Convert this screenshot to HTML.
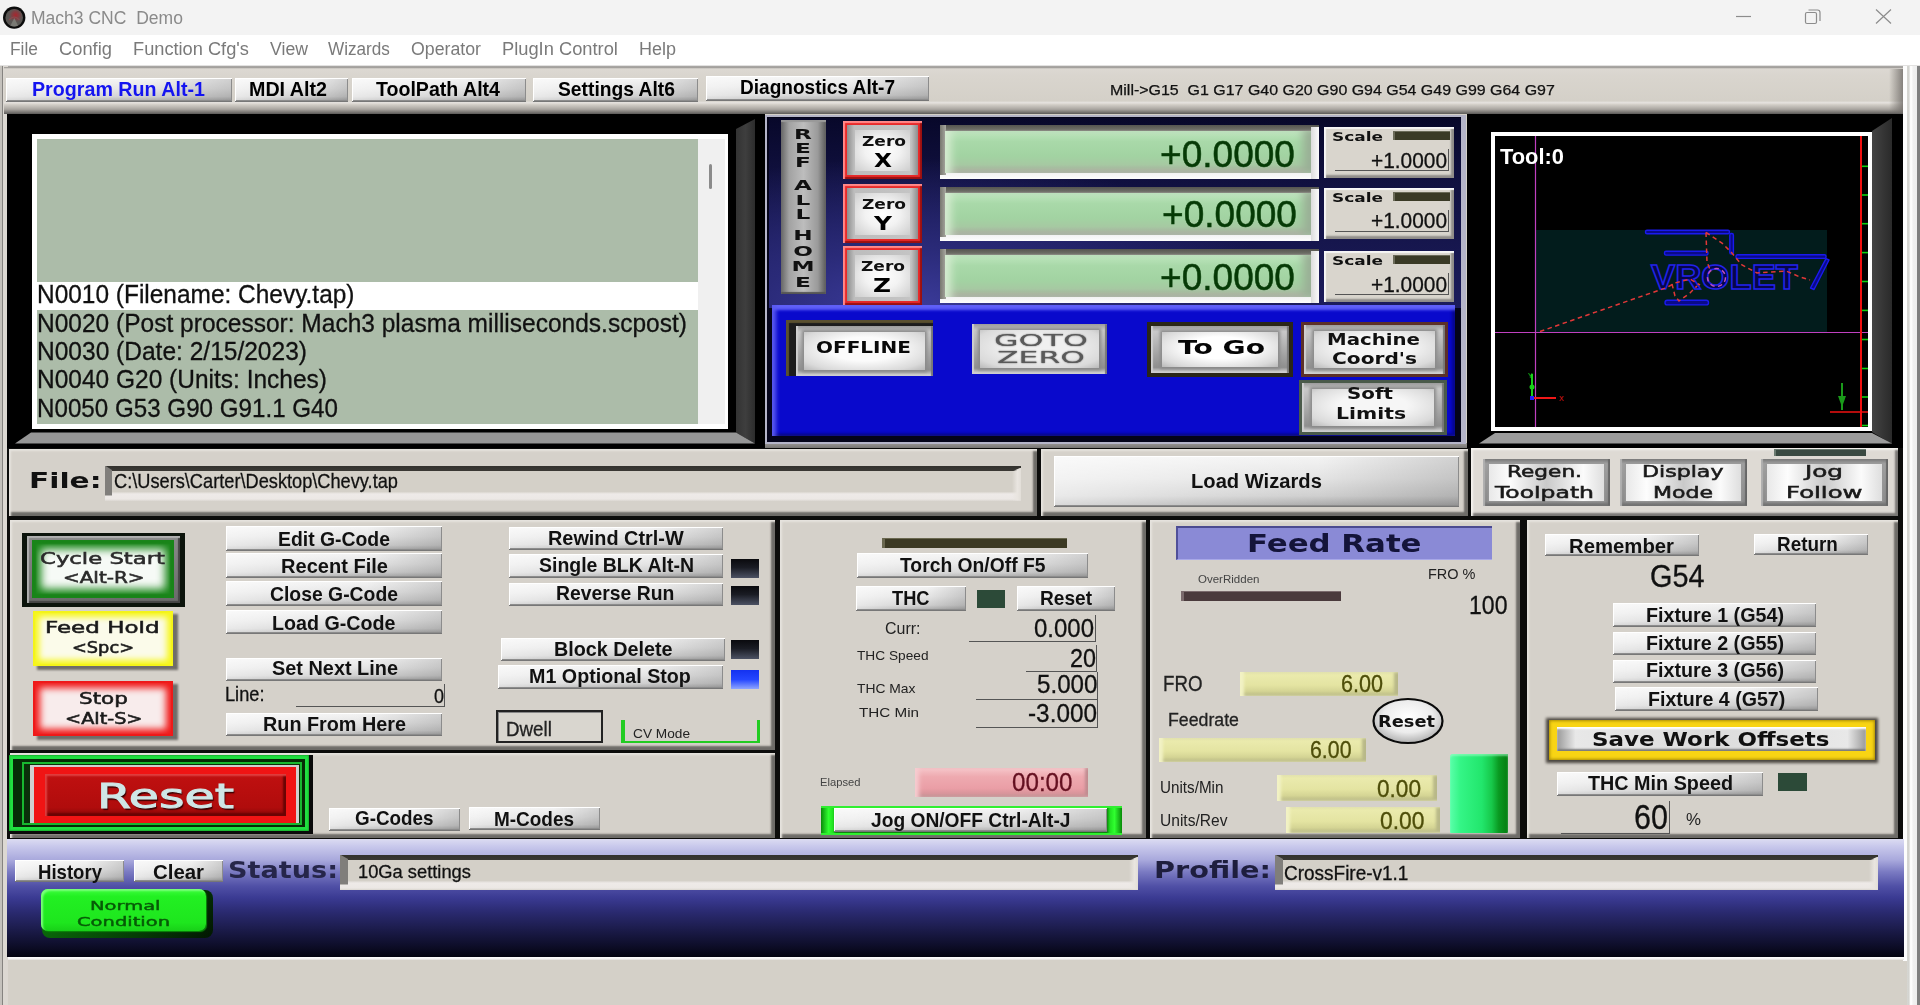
<!DOCTYPE html>
<html lang="en"><head><meta charset="utf-8"><title>Mach3 CNC Demo</title>
<style>
html,body{margin:0;padding:0;}
body{width:1920px;height:1005px;overflow:hidden;position:relative;background:#d4d0c8;font-family:"Liberation Sans",sans-serif;}
body div{position:absolute;box-sizing:border-box;}
.t{position:absolute;white-space:pre;transform-origin:0 50%;display:block;}
svg{position:absolute;overflow:visible;}
</style></head>
<body>
<div style="left:0px;top:0px;width:1920px;height:35px;background:#f3f3f3;"></div>
<div style="left:0px;top:35px;width:1920px;height:31px;background:#fff;"></div>
<svg style="left:2px;top:5px" width="25" height="25" viewBox="2 5 25 25"><defs><radialGradient id="icr" cx="58%" cy="35%" r="45%"><stop offset="0" stop-color="#a8262e"/><stop offset="0.5" stop-color="#7c4044"/><stop offset="1" stop-color="#5e5a58" stop-opacity="0"/></radialGradient></defs><circle cx="14.2" cy="17.6" r="11.2" fill="#0c0c0c"/><circle cx="14.2" cy="17.8" r="8.8" fill="#595653"/><circle cx="14.2" cy="17.8" r="8.8" fill="url(#icr)"/><path d="M10.5 25.5L14.3 18L18 25.5Q14.3 27.5 10.5 25.5Z" fill="#7a7a74"/><path d="M9 20Q14 14 19.500 20" stroke="#8a4a4e" stroke-width="1.2" fill="none"/></svg>
<span class="t" style="left:31px;top:9.01px;font:normal 18.7px/18.7px 'Liberation Sans',sans-serif;color:#8a8a8a;transform:scaleX(0.9376);">Mach3 CNC  Demo</span>
<svg style="left:1730px;top:5px" width="170" height="24" viewBox="0 0 170 24" fill="none" stroke="#8c8c8c" stroke-width="1.2"><path d="M6 11.5H21"/><rect x="75.5" y="7.5" width="11" height="11" rx="1.5"/><path d="M78.5 5H87.5Q90 5 90 7.5V16"/><path d="M146 4.5L161 18.5M161 4.5L146 18.5"/></svg>
<span class="t" style="left:10px;top:40.01px;font:normal 18.3px/18.3px 'Liberation Sans',sans-serif;color:#7a7a7a;transform:scaleX(0.9495);">File</span>
<span class="t" style="left:59px;top:40.01px;font:normal 18.3px/18.3px 'Liberation Sans',sans-serif;color:#7a7a7a;transform:scaleX(1.0019);">Config</span>
<span class="t" style="left:133px;top:40.01px;font:normal 18.3px/18.3px 'Liberation Sans',sans-serif;color:#7a7a7a;transform:scaleX(0.9966);">Function Cfg&#x27;s</span>
<span class="t" style="left:270px;top:40.01px;font:normal 18.3px/18.3px 'Liberation Sans',sans-serif;color:#7a7a7a;transform:scaleX(0.9660);">View</span>
<span class="t" style="left:328px;top:40.01px;font:normal 18.3px/18.3px 'Liberation Sans',sans-serif;color:#7a7a7a;transform:scaleX(0.9381);">Wizards</span>
<span class="t" style="left:411px;top:40.01px;font:normal 18.3px/18.3px 'Liberation Sans',sans-serif;color:#7a7a7a;transform:scaleX(0.9693);">Operator</span>
<span class="t" style="left:502px;top:40.01px;font:normal 18.3px/18.3px 'Liberation Sans',sans-serif;color:#7a7a7a;transform:scaleX(1.0003);">PlugIn Control</span>
<span class="t" style="left:639px;top:40.01px;font:normal 18.3px/18.3px 'Liberation Sans',sans-serif;color:#7a7a7a;transform:scaleX(0.9831);">Help</span>
<div style="left:0px;top:65px;width:1920px;height:2px;background:linear-gradient(180deg,#fff,#8a8784);"></div>
<div style="left:0px;top:66px;width:1.5px;height:940px;background:#c4c1bc;"></div>
<div style="left:1.5px;top:66px;width:1.5px;height:940px;background:#858380;"></div>
<div style="left:3px;top:66px;width:4.5px;height:940px;background:#dcd8d2;"></div>
<div style="left:1903.3px;top:66px;width:16.7px;height:940px;background:linear-gradient(90deg,#fdfdfd 0,#fdfdfd 3.5px,#d6d6d2 4.2px,#d2d2ce 6.2px,#fcfcfc 7px,#fdfdfd 9px,#f1f1f1 9.8px,#efefef 13.6px,#808080 14.2px,#808080 100%);"></div>
<div style="left:1903.3px;top:960.5px;width:4px;height:45px;background:#d4d0c8;"></div>
<div style="left:4px;top:67px;width:1899px;height:47px;background:linear-gradient(180deg,#908d8a 0%,#dcd8d2 4%,#d9d5ce 20%,#d4d0c8 72%,#e6e3df 76%,#d2cec7 80%,#a9a5a0 90%,#5c5a58 100%);"></div>
<div style="left:1889px;top:69px;width:14.3px;height:44px;background:linear-gradient(90deg,rgba(120,116,112,0),rgba(112,108,104,.8));"></div>
<div style="left:6px;top:78px;width:226px;height:23px;background:linear-gradient(90deg,rgba(255,255,255,.55) 0%,rgba(255,255,255,.25) 35%,rgba(0,0,0,0) 65%,rgba(0,0,0,.14) 100%),linear-gradient(180deg,#f4f4f4 0%,#e4e4e4 45%,#cfcfcf 80%,#a9a9a9 100%);box-shadow:inset 1px 1px 0 #fff,inset -1px -1px 0 #8c8c8c,0 1px 0 #777;"></div>
<span class="t" style="left:32px;top:79.21px;font:bold 20.8px/20.8px 'Liberation Sans',sans-serif;color:#1414f0;transform:scaleX(0.9455);">Program Run Alt-1</span>
<div style="left:235px;top:78px;width:113px;height:23px;background:linear-gradient(90deg,rgba(255,255,255,.55) 0%,rgba(255,255,255,.25) 35%,rgba(0,0,0,0) 65%,rgba(0,0,0,.14) 100%),linear-gradient(180deg,#f4f4f4 0%,#e4e4e4 45%,#cfcfcf 80%,#a9a9a9 100%);box-shadow:inset 1px 1px 0 #fff,inset -1px -1px 0 #8c8c8c,0 1px 0 #777;"></div>
<span class="t" style="left:249px;top:79.21px;font:bold 20.8px/20.8px 'Liberation Sans',sans-serif;color:#000;transform:scaleX(0.9463);">MDI Alt2</span>
<div style="left:352px;top:78px;width:174px;height:23px;background:linear-gradient(90deg,rgba(255,255,255,.55) 0%,rgba(255,255,255,.25) 35%,rgba(0,0,0,0) 65%,rgba(0,0,0,.14) 100%),linear-gradient(180deg,#f4f4f4 0%,#e4e4e4 45%,#cfcfcf 80%,#a9a9a9 100%);box-shadow:inset 1px 1px 0 #fff,inset -1px -1px 0 #8c8c8c,0 1px 0 #777;"></div>
<span class="t" style="left:376px;top:79.21px;font:bold 20.8px/20.8px 'Liberation Sans',sans-serif;color:#000;transform:scaleX(0.9413);">ToolPath Alt4</span>
<div style="left:533px;top:78px;width:165px;height:23px;background:linear-gradient(90deg,rgba(255,255,255,.55) 0%,rgba(255,255,255,.25) 35%,rgba(0,0,0,0) 65%,rgba(0,0,0,.14) 100%),linear-gradient(180deg,#f4f4f4 0%,#e4e4e4 45%,#cfcfcf 80%,#a9a9a9 100%);box-shadow:inset 1px 1px 0 #fff,inset -1px -1px 0 #8c8c8c,0 1px 0 #777;"></div>
<span class="t" style="left:558px;top:79.21px;font:bold 20.8px/20.8px 'Liberation Sans',sans-serif;color:#000;transform:scaleX(0.9259);">Settings Alt6</span>
<div style="left:706px;top:76px;width:223px;height:24px;background:linear-gradient(90deg,rgba(255,255,255,.55) 0%,rgba(255,255,255,.25) 35%,rgba(0,0,0,0) 65%,rgba(0,0,0,.14) 100%),linear-gradient(180deg,#f4f4f4 0%,#e4e4e4 45%,#cfcfcf 80%,#a9a9a9 100%);box-shadow:inset 1px 1px 0 #fff,inset -1px -1px 0 #8c8c8c,0 1px 0 #777;"></div>
<span class="t" style="left:740px;top:77.21px;font:bold 20.8px/20.8px 'Liberation Sans',sans-serif;color:#000;transform:scaleX(0.9165);">Diagnostics Alt-7</span>
<span class="t" style="left:1110px;top:82.81px;font:normal 14.1px/14.1px 'Liberation Sans',sans-serif;color:#111;transform:scaleX(1.1322);-webkit-text-stroke:0.25px #111;">Mill-&gt;G15  G1 G17 G40 G20 G90 G94 G54 G49 G99 G64 G97</span>
<div style="left:7px;top:114px;width:758px;height:334px;background:#000;"></div>
<svg style="left:7px;top:114px" width="758" height="334" viewBox="7 114 758 334"><defs><linearGradient id="gbv" x1="0" x2="1"><stop offset="0" stop-color="#333"/><stop offset="0.5" stop-color="#3e3e3e"/><stop offset="1" stop-color="#2c2c2c"/></linearGradient></defs><polygon points="755,119 755,443.5 736,432.5 736,129" fill="url(#gbv)"/><polygon points="15,443.5 755,443.5 736,432.5 31,432.5" fill="#969696"/></svg>
<div style="left:31.5px;top:134px;width:696px;height:294.5px;background:#fff;"></div>
<div style="left:36.5px;top:139px;width:661px;height:284.5px;background:#acbca9;"></div>
<div style="left:697.5px;top:139px;width:27px;height:284.5px;background:#f0f0f0;"></div>
<div style="left:709.2px;top:164px;width:3.2px;height:25px;background:#8b8b8b;border-radius:1.5px;"></div>
<div style="left:36.5px;top:281.5px;width:661px;height:28px;background:#fff;"></div>
<span class="t" style="left:37px;top:282.20px;font:normal 25.3px/25.3px 'Liberation Sans',sans-serif;color:#111;transform:scaleX(0.9663);-webkit-text-stroke:0.3px #111;">N0010 (Filename: Chevy.tap)</span>
<span class="t" style="left:37px;top:310.50px;font:normal 25.3px/25.3px 'Liberation Sans',sans-serif;color:#111;transform:scaleX(0.9691);-webkit-text-stroke:0.3px #111;">N0020 (Post processor: Mach3 plasma milliseconds.scpost)</span>
<span class="t" style="left:37px;top:339.00px;font:normal 25.3px/25.3px 'Liberation Sans',sans-serif;color:#111;transform:scaleX(0.9695);-webkit-text-stroke:0.3px #111;">N0030 (Date: 2/15/2023)</span>
<span class="t" style="left:37px;top:367.40px;font:normal 25.3px/25.3px 'Liberation Sans',sans-serif;color:#111;transform:scaleX(0.9682);-webkit-text-stroke:0.3px #111;">N0040 G20 (Units: Inches)</span>
<span class="t" style="left:37px;top:395.60px;font:normal 25.3px/25.3px 'Liberation Sans',sans-serif;color:#111;transform:scaleX(0.9554);-webkit-text-stroke:0.3px #111;">N0050 G53 G90 G91.1 G40</span>
<div style="left:764.5px;top:443px;width:702.0px;height:5.5px;background:linear-gradient(180deg,#9a9896,#6e6c6a);"></div>
<div style="left:764.5px;top:114.5px;width:701.5px;height:329px;background:#b4b4c8;"></div>
<div style="left:767px;top:117px;width:694px;height:324.5px;background:#04041a;"></div>
<div style="left:769px;top:118px;width:692px;height:190px;background:radial-gradient(ellipse 380px 150px at 20% 100%,#3c3c9c 0%,#2a2a78 40%,rgba(18,18,70,0) 100%),linear-gradient(180deg,#08082a 0%,#10103e 30%,#1c1c5c 100%);"></div>
<div style="left:772px;top:305px;width:683px;height:131px;background:#0909cc;box-shadow:inset 6px 0 4px -2px #5a5af0,inset 0 7px 3px -2px #6060f8,inset -5px 0 3px -2px #050590,inset 0 -3px 3px -1px #040470;"></div>
<div style="left:781px;top:120px;width:45px;height:174px;background:linear-gradient(90deg,#666 0%,#a2a2a2 18%,#bdbdbd 50%,#9a9a9a 82%,#5a5a5a 100%);box-shadow:inset 0 2px 1px #999,inset 0 -2px 1px #555;"></div>
<div style="left:793.50px;top:125.50px;width:18px;writing-mode:vertical-rl;text-orientation:upright;font:bold 14.5px/18px 'DejaVu Sans',sans-serif;letter-spacing:-1.90px;white-space:pre;color:#111;transform:scaleX(1.6);transform-origin:50% 50%;">REF</div>
<div style="left:793.50px;top:176.70px;width:18px;writing-mode:vertical-rl;text-orientation:upright;font:bold 14.5px/18px 'DejaVu Sans',sans-serif;letter-spacing:-1.35px;white-space:pre;color:#111;transform:scaleX(1.6);transform-origin:50% 50%;">ALL</div>
<div style="left:793.50px;top:226.80px;width:18px;writing-mode:vertical-rl;text-orientation:upright;font:bold 14.5px/18px 'DejaVu Sans',sans-serif;letter-spacing:-0.33px;white-space:pre;color:#111;transform:scaleX(1.6);transform-origin:50% 50%;">HOME</div>
<div style="left:843px;top:121px;width:79px;height:58px;background:#e82a2a;box-shadow:inset 2px 2px 1px #ff8a8a,inset -2px -2px 1px #9a1010;"></div>
<div style="left:847px;top:125px;width:71px;height:50px;background:linear-gradient(90deg,#8d8d8d 0%,#bdbdbd 10%,#c4c4c4 90%,#8d8d8d 100%);"></div>
<div style="left:855px;top:130px;width:55px;height:41px;background:radial-gradient(ellipse at 50% 50%,#ffffff 0%,#f2f2f2 45%,#cdcdcd 100%);"></div>
<span class="t" style="left:862px;top:134.00px;font:bold 14.5px/14.5px 'DejaVu Sans','Liberation Sans',sans-serif;color:#111;transform:scaleX(1.1746);">Zero</span>
<span class="t" style="left:874px;top:151.01px;font:bold 19px/19px 'DejaVu Sans','Liberation Sans',sans-serif;color:#000;transform:scaleX(1.2287);">X</span>
<div style="left:843px;top:184px;width:79px;height:58.5px;background:#e82a2a;box-shadow:inset 2px 2px 1px #ff8a8a,inset -2px -2px 1px #9a1010;"></div>
<div style="left:847px;top:188px;width:71px;height:50.5px;background:linear-gradient(90deg,#8d8d8d 0%,#bdbdbd 10%,#c4c4c4 90%,#8d8d8d 100%);"></div>
<div style="left:855px;top:193px;width:55px;height:41.5px;background:radial-gradient(ellipse at 50% 50%,#ffffff 0%,#f2f2f2 45%,#cdcdcd 100%);"></div>
<span class="t" style="left:862px;top:197.00px;font:bold 14.5px/14.5px 'DejaVu Sans','Liberation Sans',sans-serif;color:#111;transform:scaleX(1.1746);">Zero</span>
<span class="t" style="left:874px;top:214.01px;font:bold 19px/19px 'DejaVu Sans','Liberation Sans',sans-serif;color:#000;transform:scaleX(1.3083);">Y</span>
<div style="left:843px;top:245.5px;width:79px;height:59.5px;background:#e82a2a;box-shadow:inset 2px 2px 1px #ff8a8a,inset -2px -2px 1px #9a1010;"></div>
<div style="left:847px;top:249.5px;width:71px;height:51.5px;background:linear-gradient(90deg,#8d8d8d 0%,#bdbdbd 10%,#c4c4c4 90%,#8d8d8d 100%);"></div>
<div style="left:855px;top:254.5px;width:55px;height:42.5px;background:radial-gradient(ellipse at 50% 50%,#ffffff 0%,#f2f2f2 45%,#cdcdcd 100%);"></div>
<span class="t" style="left:861px;top:258.50px;font:bold 14.5px/14.5px 'DejaVu Sans','Liberation Sans',sans-serif;color:#111;transform:scaleX(1.1746);">Zero</span>
<span class="t" style="left:873px;top:275.51px;font:bold 19px/19px 'DejaVu Sans','Liberation Sans',sans-serif;color:#000;transform:scaleX(1.3066);">Z</span>
<div style="left:940px;top:125px;width:379px;height:54px;background:linear-gradient(180deg,#55554f 0%,#6d6d66 8%,#9a9a92 12%,#c8c8c0 80%,#f4f4f4 90%,#fdfdfd 100%);"></div>
<div style="left:940px;top:125px;width:6px;height:50px;background:linear-gradient(90deg,#77776f,#a8a8a0);"></div>
<div style="left:1311px;top:127px;width:8px;height:52px;background:linear-gradient(90deg,#dcdcdc,#fbfbfb);"></div>
<div style="left:945px;top:131px;width:366px;height:42px;background:linear-gradient(180deg,#bfe6bf 0%,#a9d9a9 25%,#a2d3a2 60%,#a6c9a2 80%,#a9a99f 100%);box-shadow:inset 10px 0 8px -4px #d6ecd2,inset -12px 0 8px -4px #9ab096;"></div>
<span class="t" style="left:1160px;top:136.71px;font:normal 36.4px/36.4px 'Liberation Sans',sans-serif;color:#063a06;transform:scaleX(1.0182);-webkit-text-stroke:0.5px #0a400a;">+0.0000</span>
<div style="left:940px;top:186.5px;width:379px;height:54px;background:linear-gradient(180deg,#55554f 0%,#6d6d66 8%,#9a9a92 12%,#c8c8c0 80%,#f4f4f4 90%,#fdfdfd 100%);"></div>
<div style="left:940px;top:186.5px;width:6px;height:50px;background:linear-gradient(90deg,#77776f,#a8a8a0);"></div>
<div style="left:1311px;top:188.5px;width:8px;height:52px;background:linear-gradient(90deg,#dcdcdc,#fbfbfb);"></div>
<div style="left:945px;top:192.5px;width:366px;height:42px;background:linear-gradient(180deg,#bfe6bf 0%,#a9d9a9 25%,#a2d3a2 60%,#a6c9a2 80%,#a9a99f 100%);box-shadow:inset 10px 0 8px -4px #d6ecd2,inset -12px 0 8px -4px #9ab096;"></div>
<span class="t" style="left:1162px;top:197.01px;font:normal 36.4px/36.4px 'Liberation Sans',sans-serif;color:#063a06;transform:scaleX(1.0182);-webkit-text-stroke:0.5px #0a400a;">+0.0000</span>
<div style="left:940px;top:249px;width:379px;height:54px;background:linear-gradient(180deg,#55554f 0%,#6d6d66 8%,#9a9a92 12%,#c8c8c0 80%,#f4f4f4 90%,#fdfdfd 100%);"></div>
<div style="left:940px;top:249px;width:6px;height:50px;background:linear-gradient(90deg,#77776f,#a8a8a0);"></div>
<div style="left:1311px;top:251px;width:8px;height:52px;background:linear-gradient(90deg,#dcdcdc,#fbfbfb);"></div>
<div style="left:945px;top:255px;width:366px;height:42px;background:linear-gradient(180deg,#bfe6bf 0%,#a9d9a9 25%,#a2d3a2 60%,#a6c9a2 80%,#a9a99f 100%);box-shadow:inset 10px 0 8px -4px #d6ecd2,inset -12px 0 8px -4px #9ab096;"></div>
<span class="t" style="left:1160px;top:260.01px;font:normal 36.4px/36.4px 'Liberation Sans',sans-serif;color:#063a06;transform:scaleX(1.0182);-webkit-text-stroke:0.5px #0a400a;">+0.0000</span>
<div style="left:1324px;top:127px;width:130px;height:51px;background:#d9d5cd;box-shadow:inset 2px 2px 1px #f6f6f6,inset -3px -3px 2px #8f8c88;"></div>
<span class="t" style="left:1332px;top:130.01px;font:bold 13px/13px 'DejaVu Sans','Liberation Sans',sans-serif;color:#111;transform:scaleX(1.3038);">Scale</span>
<div style="left:1393px;top:131px;width:57px;height:9px;background:#3a3a26;box-shadow:inset 2px 1px 0 #6a6a58;"></div>
<span class="t" style="left:1371px;top:150.50px;font:normal 21.3px/21.3px 'Liberation Sans',sans-serif;color:#111;transform:scaleX(0.9795);-webkit-text-stroke:0.3px #111;">+1.0000</span>
<div style="left:1335px;top:170px;width:114px;height:1px;background:#555;"></div>
<div style="left:1448px;top:149px;width:1px;height:22px;background:#555;"></div>
<div style="left:1324px;top:187.5px;width:130px;height:51px;background:#d9d5cd;box-shadow:inset 2px 2px 1px #f6f6f6,inset -3px -3px 2px #8f8c88;"></div>
<span class="t" style="left:1332px;top:190.51px;font:bold 13px/13px 'DejaVu Sans','Liberation Sans',sans-serif;color:#111;transform:scaleX(1.3038);">Scale</span>
<div style="left:1393px;top:191.5px;width:57px;height:9px;background:#3a3a26;box-shadow:inset 2px 1px 0 #6a6a58;"></div>
<span class="t" style="left:1371px;top:211.00px;font:normal 21.3px/21.3px 'Liberation Sans',sans-serif;color:#111;transform:scaleX(0.9795);-webkit-text-stroke:0.3px #111;">+1.0000</span>
<div style="left:1335px;top:230.5px;width:114px;height:1px;background:#555;"></div>
<div style="left:1448px;top:209.5px;width:1px;height:22px;background:#555;"></div>
<div style="left:1324px;top:251px;width:130px;height:51px;background:#d9d5cd;box-shadow:inset 2px 2px 1px #f6f6f6,inset -3px -3px 2px #8f8c88;"></div>
<span class="t" style="left:1332px;top:254.01px;font:bold 13px/13px 'DejaVu Sans','Liberation Sans',sans-serif;color:#111;transform:scaleX(1.3038);">Scale</span>
<div style="left:1393px;top:255px;width:57px;height:9px;background:#3a3a26;box-shadow:inset 2px 1px 0 #6a6a58;"></div>
<span class="t" style="left:1371px;top:274.50px;font:normal 21.3px/21.3px 'Liberation Sans',sans-serif;color:#111;transform:scaleX(0.9795);-webkit-text-stroke:0.3px #111;">+1.0000</span>
<div style="left:1335px;top:294px;width:114px;height:1px;background:#555;"></div>
<div style="left:1448px;top:273px;width:1px;height:22px;background:#555;"></div>
<div style="left:786px;top:320px;width:147px;height:56px;background:#1c1c1c;box-shadow:inset 3px 3px 1px #5a5030;"></div>
<div style="left:796px;top:326px;width:137px;height:50px;background:linear-gradient(180deg,#9b9b9b 0%,#c9c9c9 12%,#8f8f8f 88%,#e0e0e0 100%);box-shadow:inset 2px 0 1px #cfcfcf,inset -2px 0 1px #777;"></div>
<div style="left:804px;top:332px;width:121px;height:38px;background:radial-gradient(ellipse at 50% 45%,#fbfbfb 0%,#fbfbfb 40%,#dadada 80%,#b9b9b9 100%);box-shadow:0 0 3px 2px #8a8a8a;"></div>
<span class="t" style="left:816px;top:340.51px;font:bold 15.5px/15.5px 'DejaVu Sans','Liberation Sans',sans-serif;color:#0a0a0a;transform:scaleX(1.2915);">OFFLINE</span>
<div style="left:972px;top:324px;width:135px;height:50px;background:linear-gradient(180deg,#9b9b9b 0%,#c9c9c9 12%,#8f8f8f 88%,#e0e0e0 100%);box-shadow:inset 2px 0 1px #cfcfcf,inset -2px 0 1px #777;"></div>
<div style="left:980px;top:330px;width:119px;height:38px;background:radial-gradient(ellipse at 50% 45%,#f0f0f0 0%,#f0f0f0 40%,#dadada 80%,#b9b9b9 100%);box-shadow:0 0 3px 2px #8a8a8a;"></div>
<span class="t" style="left:994px;top:333.70px;font:normal 15.5px/15.5px 'DejaVu Sans','Liberation Sans',sans-serif;color:#5a5a5a;transform:scaleX(2.0488);text-shadow:0 0 1px #333;">GOTO</span>
<span class="t" style="left:997px;top:350.60px;font:normal 15.5px/15.5px 'DejaVu Sans','Liberation Sans',sans-serif;color:#5a5a5a;transform:scaleX(2.0284);text-shadow:0 0 1px #333;">ZERO</span>
<div style="left:1147px;top:322px;width:146px;height:55px;background:#2a2618;"></div>
<div style="left:1151px;top:326px;width:138px;height:47px;background:linear-gradient(180deg,#9b9b9b 0%,#c9c9c9 12%,#8f8f8f 88%,#e0e0e0 100%);box-shadow:inset 2px 0 1px #cfcfcf,inset -2px 0 1px #777;"></div>
<div style="left:1162px;top:332px;width:116px;height:35px;background:radial-gradient(ellipse at 50% 45%,#ffffff 0%,#ffffff 40%,#dadada 80%,#b9b9b9 100%);box-shadow:0 0 3px 2px #8a8a8a;"></div>
<span class="t" style="left:1178px;top:338.01px;font:bold 19px/19px 'DejaVu Sans','Liberation Sans',sans-serif;color:#050505;transform:scaleX(1.4808);">To Go</span>
<div style="left:1301px;top:322px;width:147px;height:55px;background:#5c3028;"></div>
<div style="left:1304px;top:325px;width:141px;height:49px;background:linear-gradient(180deg,#9b9b9b 0%,#c9c9c9 12%,#8f8f8f 88%,#e0e0e0 100%);box-shadow:inset 2px 0 1px #cfcfcf,inset -2px 0 1px #777;"></div>
<div style="left:1314px;top:331px;width:121px;height:37px;background:radial-gradient(ellipse at 50% 45%,#f6f6f6 0%,#f6f6f6 40%,#dadada 80%,#b9b9b9 100%);box-shadow:0 0 3px 2px #8a8a8a;"></div>
<span class="t" style="left:1327px;top:331.81px;font:bold 16px/16px 'DejaVu Sans','Liberation Sans',sans-serif;color:#111;transform:scaleX(1.2347);">Machine</span>
<span class="t" style="left:1332px;top:350.51px;font:bold 16px/16px 'DejaVu Sans','Liberation Sans',sans-serif;color:#111;transform:scaleX(1.2594);">Coord&#x27;s</span>
<div style="left:1299px;top:380px;width:148px;height:55px;background:#4a5a4a;"></div>
<div style="left:1302px;top:383px;width:142px;height:49px;background:linear-gradient(180deg,#9b9b9b 0%,#c9c9c9 12%,#8f8f8f 88%,#e0e0e0 100%);box-shadow:inset 2px 0 1px #cfcfcf,inset -2px 0 1px #777;"></div>
<div style="left:1312px;top:389px;width:122px;height:37px;background:radial-gradient(ellipse at 50% 45%,#f6f6f6 0%,#f6f6f6 40%,#dadada 80%,#b9b9b9 100%);box-shadow:0 0 3px 2px #8a8a8a;"></div>
<span class="t" style="left:1347px;top:386.01px;font:bold 16px/16px 'DejaVu Sans','Liberation Sans',sans-serif;color:#111;transform:scaleX(1.2390);">Soft</span>
<span class="t" style="left:1336px;top:406.01px;font:bold 16px/16px 'DejaVu Sans','Liberation Sans',sans-serif;color:#111;transform:scaleX(1.2725);">Limits</span>
<div style="left:7px;top:448px;width:1896px;height:392px;background:#0c0c0b;"></div>
<div style="left:1467px;top:114px;width:436px;height:334px;background:#000;"></div>
<svg style="left:1467px;top:114px" width="436" height="334" viewBox="1467 114 436 334"><defs><linearGradient id="tpr" x1="0" x2="1"><stop offset="0" stop-color="#444"/><stop offset="1" stop-color="#2a2a2a"/></linearGradient></defs><polygon points="1892,118 1892,444 1872,432 1872,131" fill="url(#tpr)"/><polygon points="1479,443.5 1892,443.5 1872,433 1495,433" fill="#9c9c9c"/></svg>
<div style="left:1491px;top:132px;width:381px;height:299px;background:#fff;"></div>
<div style="left:1495px;top:136px;width:373px;height:291px;background:#000;"></div>
<div style="left:1536px;top:230px;width:291px;height:102px;background:#021c1c;"></div>
<svg style="left:1495px;top:136px" width="373" height="291" viewBox="1495 136 373 291"><line x1="1535.5" y1="136" x2="1535.5" y2="427" stroke="#c040c0" stroke-width="1.2"/><line x1="1495" y1="332.5" x2="1868" y2="332.5" stroke="#c040c0" stroke-width="1.2"/><line x1="1861" y1="136" x2="1861" y2="427" stroke="#f01010" stroke-width="2"/><line x1="1862" y1="166.3" x2="1868" y2="166.3" stroke="#10d010" stroke-width="1.6"/><line x1="1862" y1="195" x2="1868" y2="195" stroke="#10d010" stroke-width="1.6"/><line x1="1862" y1="223.7" x2="1868" y2="223.7" stroke="#10d010" stroke-width="1.6"/><line x1="1862" y1="252.6" x2="1868" y2="252.6" stroke="#10d010" stroke-width="1.6"/><line x1="1862" y1="281.5" x2="1868" y2="281.5" stroke="#10d010" stroke-width="1.6"/><line x1="1862" y1="310.4" x2="1868" y2="310.4" stroke="#10d010" stroke-width="1.6"/><line x1="1862" y1="339.5" x2="1868" y2="339.5" stroke="#10d010" stroke-width="1.6"/><line x1="1862" y1="368.5" x2="1868" y2="368.5" stroke="#10d010" stroke-width="1.6"/><line x1="1862" y1="397" x2="1868" y2="397" stroke="#10d010" stroke-width="1.6"/><line x1="1862" y1="425.5" x2="1868" y2="425.5" stroke="#10d010" stroke-width="1.6"/><g stroke="#1a1aee" stroke-width="1.4" fill="#0a0a88" stroke-linejoin="round"><rect x="1645.5" y="230.3" width="84" height="3.4" rx="1.5"/><rect x="1729.8" y="233.5" width="3.6" height="20.5" rx="1.5"/><rect x="1664.5" y="251.3" width="43.5" height="3.8" rx="1.5"/><rect x="1736" y="254.8" width="90" height="3.6" rx="1.5"/><rect x="1665" y="300.3" width="43.5" height="4.6" rx="2.2"/><path d="M1826 258.6L1829 260L1814 289.5L1810.5 288Z"/></g><text x="1651" y="289" font-family="'Liberation Sans',sans-serif" font-weight="bold" font-size="35" textLength="147" lengthAdjust="spacingAndGlyphs" fill="#06064a" stroke="#2222ea" stroke-width="1.5">VROLET</text><g stroke="#e23838" stroke-width="1.5" fill="none" stroke-dasharray="4.5 3.5"><path d="M1540 331.5L1580 317.5L1667 287.5L1675 283L1690 279L1700 285"/><path d="M1672 284L1675 296L1679 301L1690 293L1697 286"/><path d="M1706 232.5L1707 262L1711 272"/><path d="M1706 232.5L1722 243L1731 252L1742 265L1757 273L1770 272L1786 271L1800 277L1810 280"/><circle cx="1716.500" cy="277.5" r="9" stroke="#c050c0"/></g><line x1="1532" y1="374" x2="1532" y2="397" stroke="#18d018" stroke-width="2"/><line x1="1533" y1="398" x2="1556" y2="398" stroke="#f01818" stroke-width="2"/><rect x="1530" y="396" width="4" height="4" fill="#2020ff"/><circle cx="1532" cy="387" r="2.5" fill="#18d018"/><text x="1528" y="378" font-size="7" fill="#18d018" font-family="'Liberation Sans',sans-serif">Y</text><text x="1559" y="401" font-size="7" fill="#f01818" font-family="'Liberation Sans',sans-serif">X</text><line x1="1842" y1="383" x2="1842" y2="410" stroke="#1a9a1a" stroke-width="2"/><path d="M1838 396H1846L1842 407Z" fill="#1a9a1a"/><line x1="1830" y1="412" x2="1868" y2="412" stroke="#f01010" stroke-width="1.6"/></svg>
<span class="t" style="left:1499.5px;top:146.00px;font:bold 21.8px/21.8px 'Liberation Sans',sans-serif;color:#fff;transform:scaleX(1.0036);">Tool:0</span>
<div style="left:1471px;top:448px;width:427px;height:68px;background:#dedad4;box-shadow:inset 2px 2px 2px #f4f2ee,inset -3px -3px 2px #7a7875;"></div>
<div style="left:1774px;top:449px;width:92px;height:7px;background:#3a4a42;box-shadow:inset 2px 1px 0 #6a7a70;"></div>
<div style="left:1483px;top:459px;width:127px;height:47px;background:linear-gradient(180deg,#777 0%,#a0a0a0 10%,#8a8a8a 90%,#6a6a6a 100%);box-shadow:inset 2px 0 1px #b0b0b0,inset -2px 0 1px #666;"></div>
<div style="left:1489px;top:464px;width:115px;height:37px;background:linear-gradient(90deg,#e8e8e8 0%,#fdfdfd 18%,#c9c9c9 50%,#fbfbfb 82%,#dedede 100%);box-shadow:0 0 2px 1px #999;"></div>
<span class="t" style="left:1507px;top:464.31px;font:normal 16.5px/16.5px 'DejaVu Sans','Liberation Sans',sans-serif;color:#1a1a1a;transform:scaleX(1.3111);-webkit-text-stroke:0.55px #1a1a1a;">Regen.</span>
<span class="t" style="left:1495px;top:484.61px;font:normal 16.5px/16.5px 'DejaVu Sans','Liberation Sans',sans-serif;color:#1a1a1a;transform:scaleX(1.4232);-webkit-text-stroke:0.55px #1a1a1a;">Toolpath</span>
<div style="left:1620px;top:459px;width:127px;height:47px;background:linear-gradient(180deg,#777 0%,#a0a0a0 10%,#8a8a8a 90%,#6a6a6a 100%);box-shadow:inset 2px 0 1px #b0b0b0,inset -2px 0 1px #666;"></div>
<div style="left:1626px;top:464px;width:115px;height:37px;background:linear-gradient(90deg,#e8e8e8 0%,#fdfdfd 18%,#c9c9c9 50%,#fbfbfb 82%,#dedede 100%);box-shadow:0 0 2px 1px #999;"></div>
<span class="t" style="left:1642px;top:464.31px;font:normal 16.5px/16.5px 'DejaVu Sans','Liberation Sans',sans-serif;color:#1a1a1a;transform:scaleX(1.3400);-webkit-text-stroke:0.55px #1a1a1a;">Display</span>
<span class="t" style="left:1653px;top:484.61px;font:normal 16.5px/16.5px 'DejaVu Sans','Liberation Sans',sans-serif;color:#1a1a1a;transform:scaleX(1.3346);-webkit-text-stroke:0.55px #1a1a1a;">Mode</span>
<div style="left:1761px;top:459px;width:127px;height:47px;background:linear-gradient(180deg,#777 0%,#a0a0a0 10%,#8a8a8a 90%,#6a6a6a 100%);box-shadow:inset 2px 0 1px #b0b0b0,inset -2px 0 1px #666;"></div>
<div style="left:1767px;top:464px;width:115px;height:37px;background:linear-gradient(90deg,#e8e8e8 0%,#fdfdfd 18%,#c9c9c9 50%,#fbfbfb 82%,#dedede 100%);box-shadow:0 0 2px 1px #999;"></div>
<span class="t" style="left:1805px;top:464.31px;font:normal 16.5px/16.5px 'DejaVu Sans','Liberation Sans',sans-serif;color:#1a1a1a;transform:scaleX(1.4940);-webkit-text-stroke:0.55px #1a1a1a;">Jog</span>
<span class="t" style="left:1786px;top:484.61px;font:normal 16.5px/16.5px 'DejaVu Sans','Liberation Sans',sans-serif;color:#1a1a1a;transform:scaleX(1.4781);-webkit-text-stroke:0.55px #1a1a1a;">Follow</span>
<div style="left:9px;top:449px;width:1028px;height:67px;background:#d5d1ca;box-shadow:inset 2px 2px 2px #e6e3de,inset -4px -4px 2px #6e6c68;"></div>
<span class="t" style="left:28.5px;top:470.51px;font:bold 20.5px/20.5px 'DejaVu Sans','Liberation Sans',sans-serif;color:#111;transform:scaleX(1.4453);">File:</span>
<div style="left:105px;top:465.5px;width:916px;height:35px;background:linear-gradient(180deg,#33322e 0,#3a3834 4.5px,#d4d0c8 5px,#d4d0c8 calc(100% - 9.5px),#eeeae8 calc(100% - 7px),#ece8e5 calc(100% - 2px),#dad6d0 100%);"></div>
<div style="left:105px;top:465.5px;width:7px;height:30px;background:#807e7b;clip-path:polygon(0 0,100% 4.5px,100% 100%,0 100%);"></div>
<div style="left:1012px;top:467.5px;width:9px;height:33px;background:linear-gradient(90deg,rgba(236,232,228,0),#e9e5e0 60%,#e2ded8);clip-path:polygon(0 4px,100% 0,100% 100%,0 100%);"></div>
<span class="t" style="left:114px;top:471.01px;font:normal 20.8px/20.8px 'Liberation Sans',sans-serif;color:#111;transform:scaleX(0.8754);-webkit-text-stroke:0.3px #111;">C:\Users\Carter\Desktop\Chevy.tap</span>
<div style="left:1041px;top:449px;width:427px;height:67px;background:#d5d1ca;box-shadow:inset 2px 2px 2px #e6e3de,inset -4px -4px 2px #6e6c68;"></div>
<div style="left:1054px;top:456px;width:405px;height:50px;background:linear-gradient(90deg,rgba(255,255,255,.55) 0%,rgba(255,255,255,.25) 35%,rgba(0,0,0,0) 65%,rgba(0,0,0,.14) 100%),linear-gradient(180deg,#f4f4f4 0%,#e4e4e4 45%,#cfcfcf 80%,#a9a9a9 100%);box-shadow:inset 1px 1px 0 #fff,inset -1px -1px 0 #8c8c8c,0 1px 0 #777;"></div>
<span class="t" style="left:1191px;top:471.00px;font:bold 20.3px/20.3px 'Liberation Sans',sans-serif;color:#111;transform:scaleX(0.9941);">Load Wizards</span>
<div style="left:10px;top:520px;width:764.5px;height:230px;background:#d5d1ca;box-shadow:inset 2px 2px 2px #e6e3de,inset -4px -4px 2px #6e6c68;"></div>
<div style="left:10px;top:753px;width:764.5px;height:85px;background:#d5d1ca;box-shadow:inset 2px 2px 2px #e6e3de,inset -4px -4px 2px #6e6c68;"></div>
<div style="left:22px;top:533px;width:163px;height:74px;background:#0c140c;"></div>
<div style="left:27px;top:536px;width:153px;height:67px;background:linear-gradient(180deg,#8a8a8a,#6a6a6a);box-shadow:inset 2px 2px 1px #b0b0b0,inset -2px -2px 1px #444;"></div>
<div style="left:32px;top:540px;width:142px;height:58px;background:#f6faf6;box-shadow:inset 0 0 8px 9px #1a861a,inset 0 0 2px 4px #0f6a0f;"></div>
<span class="t" style="left:40px;top:550.71px;font:normal 16.5px/16.5px 'DejaVu Sans','Liberation Sans',sans-serif;color:#2a2a2a;transform:scaleX(1.3790);-webkit-text-stroke:0.55px #2a2a2a;">Cycle Start</span>
<span class="t" style="left:62.5px;top:570.51px;font:normal 15px/15px 'DejaVu Sans','Liberation Sans',sans-serif;color:#2a2a2a;transform:scaleX(1.3299);-webkit-text-stroke:0.55px #2a2a2a;">&lt;Alt-R&gt;</span>
<div style="left:37px;top:614px;width:141px;height:56px;background:#6f6d69;filter:blur(1px);"></div>
<div style="left:33px;top:611px;width:140px;height:55px;background:#fbfbea;box-shadow:inset 0 0 6px 6px #f6f61a,inset 0 0 1px 2px #d8d810;"></div>
<span class="t" style="left:45px;top:620.01px;font:normal 16.5px/16.5px 'DejaVu Sans','Liberation Sans',sans-serif;color:#1a1a1a;transform:scaleX(1.3935);-webkit-text-stroke:0.55px #1a1a1a;">Feed Hold</span>
<span class="t" style="left:72px;top:641.01px;font:normal 15px/15px 'DejaVu Sans','Liberation Sans',sans-serif;color:#1a1a1a;transform:scaleX(1.1826);-webkit-text-stroke:0.55px #1a1a1a;">&lt;Spc&gt;</span>
<div style="left:37px;top:684px;width:141px;height:56px;background:#6f6d69;filter:blur(1px);"></div>
<div style="left:33px;top:681px;width:140px;height:55px;background:#f8ecec;box-shadow:inset 0 0 7px 7px #f01a1a,inset 0 0 1px 2px #c81010;"></div>
<span class="t" style="left:78.7px;top:690.71px;font:normal 16.5px/16.5px 'DejaVu Sans','Liberation Sans',sans-serif;color:#1a1a1a;transform:scaleX(1.3009);-webkit-text-stroke:0.55px #1a1a1a;">Stop</span>
<span class="t" style="left:64.5px;top:711.71px;font:normal 15px/15px 'DejaVu Sans','Liberation Sans',sans-serif;color:#1a1a1a;transform:scaleX(1.2835);-webkit-text-stroke:0.55px #1a1a1a;">&lt;Alt-S&gt;</span>
<div style="left:226px;top:526px;width:216px;height:24px;background:linear-gradient(90deg,rgba(255,255,255,.55) 0%,rgba(255,255,255,.25) 35%,rgba(0,0,0,0) 65%,rgba(0,0,0,.14) 100%),linear-gradient(180deg,#f4f4f4 0%,#e4e4e4 45%,#cfcfcf 80%,#a9a9a9 100%);box-shadow:inset 1px 1px 0 #fff,inset -1px -1px 0 #8c8c8c,0 1px 0 #777;"></div>
<span class="t" style="left:277.5px;top:528.51px;font:bold 20.8px/20.8px 'Liberation Sans',sans-serif;color:#111;transform:scaleX(0.9320);">Edit G-Code</span>
<div style="left:226px;top:553px;width:216px;height:24px;background:linear-gradient(90deg,rgba(255,255,255,.55) 0%,rgba(255,255,255,.25) 35%,rgba(0,0,0,0) 65%,rgba(0,0,0,.14) 100%),linear-gradient(180deg,#f4f4f4 0%,#e4e4e4 45%,#cfcfcf 80%,#a9a9a9 100%);box-shadow:inset 1px 1px 0 #fff,inset -1px -1px 0 #8c8c8c,0 1px 0 #777;"></div>
<span class="t" style="left:281px;top:555.51px;font:bold 20.8px/20.8px 'Liberation Sans',sans-serif;color:#111;transform:scaleX(0.9642);">Recent File</span>
<div style="left:226px;top:581px;width:216px;height:24px;background:linear-gradient(90deg,rgba(255,255,255,.55) 0%,rgba(255,255,255,.25) 35%,rgba(0,0,0,0) 65%,rgba(0,0,0,.14) 100%),linear-gradient(180deg,#f4f4f4 0%,#e4e4e4 45%,#cfcfcf 80%,#a9a9a9 100%);box-shadow:inset 1px 1px 0 #fff,inset -1px -1px 0 #8c8c8c,0 1px 0 #777;"></div>
<span class="t" style="left:270px;top:583.71px;font:bold 20.8px/20.8px 'Liberation Sans',sans-serif;color:#111;transform:scaleX(0.9307);">Close G-Code</span>
<div style="left:226px;top:610px;width:216px;height:23px;background:linear-gradient(90deg,rgba(255,255,255,.55) 0%,rgba(255,255,255,.25) 35%,rgba(0,0,0,0) 65%,rgba(0,0,0,.14) 100%),linear-gradient(180deg,#f4f4f4 0%,#e4e4e4 45%,#cfcfcf 80%,#a9a9a9 100%);box-shadow:inset 1px 1px 0 #fff,inset -1px -1px 0 #8c8c8c,0 1px 0 #777;"></div>
<span class="t" style="left:272px;top:612.51px;font:bold 20.8px/20.8px 'Liberation Sans',sans-serif;color:#111;transform:scaleX(0.9458);">Load G-Code</span>
<div style="left:226px;top:657.5px;width:216px;height:22px;background:linear-gradient(90deg,rgba(255,255,255,.55) 0%,rgba(255,255,255,.25) 35%,rgba(0,0,0,0) 65%,rgba(0,0,0,.14) 100%),linear-gradient(180deg,#f4f4f4 0%,#e4e4e4 45%,#cfcfcf 80%,#a9a9a9 100%);box-shadow:inset 1px 1px 0 #fff,inset -1px -1px 0 #8c8c8c,0 1px 0 #777;"></div>
<span class="t" style="left:272px;top:658.01px;font:bold 20.8px/20.8px 'Liberation Sans',sans-serif;color:#111;transform:scaleX(0.9562);">Set Next Line</span>
<span class="t" style="left:225px;top:685.00px;font:normal 19.8px/19.8px 'Liberation Sans',sans-serif;color:#111;transform:scaleX(0.9200);-webkit-text-stroke:0.3px #111;">Line:</span>
<div style="left:296px;top:706px;width:149px;height:1px;background:#555;"></div>
<div style="left:444px;top:684px;width:1px;height:23px;background:#555;"></div>
<span class="t" style="left:433.5px;top:686.50px;font:normal 19.8px/19.8px 'Liberation Sans',sans-serif;color:#111;transform:scaleX(0.9081);-webkit-text-stroke:0.3px #111;">0</span>
<div style="left:226px;top:713px;width:216px;height:22px;background:linear-gradient(90deg,rgba(255,255,255,.55) 0%,rgba(255,255,255,.25) 35%,rgba(0,0,0,0) 65%,rgba(0,0,0,.14) 100%),linear-gradient(180deg,#f4f4f4 0%,#e4e4e4 45%,#cfcfcf 80%,#a9a9a9 100%);box-shadow:inset 1px 1px 0 #fff,inset -1px -1px 0 #8c8c8c,0 1px 0 #777;"></div>
<span class="t" style="left:263px;top:713.51px;font:bold 20.8px/20.8px 'Liberation Sans',sans-serif;color:#111;transform:scaleX(0.9518);">Run From Here</span>
<div style="left:509px;top:527px;width:214px;height:22px;background:linear-gradient(90deg,rgba(255,255,255,.55) 0%,rgba(255,255,255,.25) 35%,rgba(0,0,0,0) 65%,rgba(0,0,0,.14) 100%),linear-gradient(180deg,#f4f4f4 0%,#e4e4e4 45%,#cfcfcf 80%,#a9a9a9 100%);box-shadow:inset 1px 1px 0 #fff,inset -1px -1px 0 #8c8c8c,0 1px 0 #777;"></div>
<span class="t" style="left:548px;top:527.61px;font:bold 20.8px/20.8px 'Liberation Sans',sans-serif;color:#111;transform:scaleX(0.9548);">Rewind Ctrl-W</span>
<div style="left:509px;top:554px;width:214px;height:22.6px;background:linear-gradient(90deg,rgba(255,255,255,.55) 0%,rgba(255,255,255,.25) 35%,rgba(0,0,0,0) 65%,rgba(0,0,0,.14) 100%),linear-gradient(180deg,#f4f4f4 0%,#e4e4e4 45%,#cfcfcf 80%,#a9a9a9 100%);box-shadow:inset 1px 1px 0 #fff,inset -1px -1px 0 #8c8c8c,0 1px 0 #777;"></div>
<span class="t" style="left:539px;top:555.41px;font:bold 20.8px/20.8px 'Liberation Sans',sans-serif;color:#111;transform:scaleX(0.9359);">Single BLK Alt-N</span>
<div style="left:509px;top:582.5px;width:214px;height:22px;background:linear-gradient(90deg,rgba(255,255,255,.55) 0%,rgba(255,255,255,.25) 35%,rgba(0,0,0,0) 65%,rgba(0,0,0,.14) 100%),linear-gradient(180deg,#f4f4f4 0%,#e4e4e4 45%,#cfcfcf 80%,#a9a9a9 100%);box-shadow:inset 1px 1px 0 #fff,inset -1px -1px 0 #8c8c8c,0 1px 0 #777;"></div>
<span class="t" style="left:555.6px;top:583.01px;font:bold 20.8px/20.8px 'Liberation Sans',sans-serif;color:#111;transform:scaleX(0.9310);">Reverse Run</span>
<div style="left:501px;top:638px;width:224px;height:22px;background:linear-gradient(90deg,rgba(255,255,255,.55) 0%,rgba(255,255,255,.25) 35%,rgba(0,0,0,0) 65%,rgba(0,0,0,.14) 100%),linear-gradient(180deg,#f4f4f4 0%,#e4e4e4 45%,#cfcfcf 80%,#a9a9a9 100%);box-shadow:inset 1px 1px 0 #fff,inset -1px -1px 0 #8c8c8c,0 1px 0 #777;"></div>
<span class="t" style="left:554px;top:638.61px;font:bold 20.8px/20.8px 'Liberation Sans',sans-serif;color:#111;transform:scaleX(0.9499);">Block Delete</span>
<div style="left:497.5px;top:665.4px;width:225px;height:22.6px;background:linear-gradient(90deg,rgba(255,255,255,.55) 0%,rgba(255,255,255,.25) 35%,rgba(0,0,0,0) 65%,rgba(0,0,0,.14) 100%),linear-gradient(180deg,#f4f4f4 0%,#e4e4e4 45%,#cfcfcf 80%,#a9a9a9 100%);box-shadow:inset 1px 1px 0 #fff,inset -1px -1px 0 #8c8c8c,0 1px 0 #777;"></div>
<span class="t" style="left:528.8px;top:665.81px;font:bold 20.8px/20.8px 'Liberation Sans',sans-serif;color:#111;transform:scaleX(0.9467);">M1 Optional Stop</span>
<div style="left:731px;top:559px;width:28px;height:18.5px;background:linear-gradient(180deg,#0a0a0e 0%,#1a1c24 45%,#4c5264 100%);"></div>
<div style="left:731px;top:586px;width:28px;height:18.5px;background:linear-gradient(180deg,#0a0a0e 0%,#1a1c24 45%,#4c5264 100%);"></div>
<div style="left:731px;top:640px;width:28px;height:18.5px;background:linear-gradient(180deg,#0a0a0e 0%,#1a1c24 45%,#4c5264 100%);"></div>
<div style="left:731px;top:669.6px;width:28px;height:19px;background:linear-gradient(180deg,#1432f0 0%,#2446ff 50%,#8fa6ff 100%);"></div>
<div style="left:495.5px;top:710px;width:107px;height:33px;background:#d9d6cf;border:2px solid #222;box-shadow:inset 1px 1px 0 #888;"></div>
<span class="t" style="left:505.5px;top:720.00px;font:normal 19.8px/19.8px 'Liberation Sans',sans-serif;color:#222;transform:scaleX(0.9482);-webkit-text-stroke:0.3px #222;">Dwell</span>
<div style="left:621px;top:720.4px;width:4px;height:22.5px;background:#22cc22;"></div>
<div style="left:756.5px;top:720.4px;width:3.5px;height:22.5px;background:#22cc22;"></div>
<div style="left:621px;top:741px;width:139px;height:2px;background:#22cc22;"></div>
<span class="t" style="left:633px;top:726.81px;font:normal 13.5px/13.5px 'Liberation Sans',sans-serif;color:#222;transform:scaleX(1.0129);">CV Mode</span>
<div style="left:8.5px;top:755px;width:304px;height:79px;background:#0a0a0a;"></div>
<div style="left:9px;top:755px;width:300px;height:76px;background:#20e040;box-shadow:inset 0 0 2px #0a5a0a;"></div>
<div style="left:13px;top:759px;width:292px;height:68px;background:#062c06;"></div>
<div style="left:22px;top:762px;width:280px;height:63px;background:#18b830;"></div>
<div style="left:24px;top:764px;width:276px;height:59px;background:#0a300a;"></div>
<div style="left:30px;top:765px;width:269px;height:58px;background:#d0d0d0;"></div>
<div style="left:34px;top:767px;width:262px;height:55.5px;background:#f01414;"></div>
<div style="left:45px;top:773.5px;width:241px;height:42.5px;background:linear-gradient(180deg,#c01010 0%,#b00c0c 80%,#8a0808 100%);box-shadow:inset 2px 2px 2px #e04040,inset -3px -3px 2px #6a0404;"></div>
<span class="t" style="left:97px;top:778.50px;font:normal 34px/34px 'DejaVu Sans','Liberation Sans',sans-serif;color:#cfe6e6;transform:scaleX(1.4424);-webkit-text-stroke:1px #cfe6e6;text-shadow:1px 2px 1px #300;">Reset</span>
<div style="left:328.7px;top:808px;width:131.5px;height:21.5px;background:linear-gradient(90deg,rgba(255,255,255,.55) 0%,rgba(255,255,255,.25) 35%,rgba(0,0,0,0) 65%,rgba(0,0,0,.14) 100%),linear-gradient(180deg,#f4f4f4 0%,#e4e4e4 45%,#cfcfcf 80%,#a9a9a9 100%);box-shadow:inset 1px 1px 0 #fff,inset -1px -1px 0 #8c8c8c,0 1px 0 #777;"></div>
<span class="t" style="left:354.5px;top:808.01px;font:bold 20.8px/20.8px 'Liberation Sans',sans-serif;color:#111;transform:scaleX(0.9057);">G-Codes</span>
<div style="left:468.5px;top:806.5px;width:131.5px;height:22.5px;background:linear-gradient(90deg,rgba(255,255,255,.55) 0%,rgba(255,255,255,.25) 35%,rgba(0,0,0,0) 65%,rgba(0,0,0,.14) 100%),linear-gradient(180deg,#f4f4f4 0%,#e4e4e4 45%,#cfcfcf 80%,#a9a9a9 100%);box-shadow:inset 1px 1px 0 #fff,inset -1px -1px 0 #8c8c8c,0 1px 0 #777;"></div>
<span class="t" style="left:494px;top:808.51px;font:bold 20.8px/20.8px 'Liberation Sans',sans-serif;color:#111;transform:scaleX(0.9109);">M-Codes</span>
<div style="left:779.5px;top:520px;width:366px;height:318px;background:#d5d1ca;box-shadow:inset 2px 2px 2px #e6e3de,inset -4px -4px 2px #6e6c68;"></div>
<div style="left:882px;top:537.5px;width:185px;height:10.5px;background:#3c3a24;box-shadow:inset 3px 1px 0 #6a6850;"></div>
<div style="left:856.5px;top:553px;width:231px;height:23.5px;background:linear-gradient(90deg,rgba(255,255,255,.55) 0%,rgba(255,255,255,.25) 35%,rgba(0,0,0,0) 65%,rgba(0,0,0,.14) 100%),linear-gradient(180deg,#f4f4f4 0%,#e4e4e4 45%,#cfcfcf 80%,#a9a9a9 100%);box-shadow:inset 1px 1px 0 #fff,inset -1px -1px 0 #8c8c8c,0 1px 0 #777;"></div>
<span class="t" style="left:899.5px;top:555.01px;font:bold 20.8px/20.8px 'Liberation Sans',sans-serif;color:#111;transform:scaleX(0.9281);">Torch On/Off F5</span>
<div style="left:855.5px;top:586px;width:110px;height:23.5px;background:linear-gradient(90deg,rgba(255,255,255,.55) 0%,rgba(255,255,255,.25) 35%,rgba(0,0,0,0) 65%,rgba(0,0,0,.14) 100%),linear-gradient(180deg,#f4f4f4 0%,#e4e4e4 45%,#cfcfcf 80%,#a9a9a9 100%);box-shadow:inset 1px 1px 0 #fff,inset -1px -1px 0 #8c8c8c,0 1px 0 #777;"></div>
<span class="t" style="left:892px;top:588.01px;font:bold 20.8px/20.8px 'Liberation Sans',sans-serif;color:#111;transform:scaleX(0.8772);">THC</span>
<div style="left:976.5px;top:590px;width:28.5px;height:18px;background:#2c4a38;"></div>
<div style="left:1016.5px;top:586px;width:98px;height:23.5px;background:linear-gradient(90deg,rgba(255,255,255,.55) 0%,rgba(255,255,255,.25) 35%,rgba(0,0,0,0) 65%,rgba(0,0,0,.14) 100%),linear-gradient(180deg,#f4f4f4 0%,#e4e4e4 45%,#cfcfcf 80%,#a9a9a9 100%);box-shadow:inset 1px 1px 0 #fff,inset -1px -1px 0 #8c8c8c,0 1px 0 #777;"></div>
<span class="t" style="left:1040px;top:588.01px;font:bold 20.8px/20.8px 'Liberation Sans',sans-serif;color:#111;transform:scaleX(0.9179);">Reset</span>
<span class="t" style="left:885px;top:621.01px;font:normal 15.6px/15.6px 'Liberation Sans',sans-serif;color:#222;transform:scaleX(1.0240);">Curr:</span>
<span class="t" style="left:1034px;top:615.51px;font:normal 25px/25px 'Liberation Sans',sans-serif;color:#111;transform:scaleX(0.9590);-webkit-text-stroke:0.3px #111;">0.000</span>
<div style="left:968.5px;top:641px;width:127.5px;height:1px;background:#555;"></div>
<div style="left:1095px;top:615px;width:1px;height:27px;background:#555;"></div>
<span class="t" style="left:857px;top:649.01px;font:normal 13.5px/13.5px 'Liberation Sans',sans-serif;color:#222;transform:scaleX(1.0137);">THC Speed</span>
<span class="t" style="left:1069.5px;top:646.01px;font:normal 25px/25px 'Liberation Sans',sans-serif;color:#111;transform:scaleX(0.9350);-webkit-text-stroke:0.3px #111;">20</span>
<div style="left:1026px;top:670.5px;width:71px;height:1px;background:#555;"></div>
<div style="left:1096px;top:645px;width:1px;height:26.5px;background:#555;"></div>
<span class="t" style="left:857px;top:682.01px;font:normal 13.5px/13.5px 'Liberation Sans',sans-serif;color:#222;transform:scaleX(1.0263);">THC Max</span>
<span class="t" style="left:1036.5px;top:672.01px;font:normal 25px/25px 'Liberation Sans',sans-serif;color:#111;transform:scaleX(0.9670);-webkit-text-stroke:0.3px #111;">5.000</span>
<div style="left:976px;top:698.5px;width:122px;height:1px;background:#555;"></div>
<div style="left:1097px;top:672px;width:1px;height:27.5px;background:#555;"></div>
<span class="t" style="left:859px;top:705.61px;font:normal 13.5px/13.5px 'Liberation Sans',sans-serif;color:#222;transform:scaleX(1.1268);">THC Min</span>
<span class="t" style="left:1028px;top:700.81px;font:normal 25px/25px 'Liberation Sans',sans-serif;color:#111;transform:scaleX(0.9734);-webkit-text-stroke:0.3px #111;">-3.000</span>
<div style="left:976px;top:727px;width:122px;height:1px;background:#555;"></div>
<div style="left:1097px;top:700px;width:1px;height:28px;background:#555;"></div>
<span class="t" style="left:819.5px;top:778.00px;font:normal 10.4px/10.4px 'Liberation Sans',sans-serif;color:#444;transform:scaleX(1.0776);">Elapsed</span>
<div style="left:914.5px;top:768px;width:173px;height:29px;background:linear-gradient(180deg,#f6c6ca 0%,#eeaab0 30%,#ea9ea6 70%,#d8949a 88%,#b88a8c 100%);box-shadow:inset 5px 0 4px -1px #f6ccd0,inset -4px 0 3px -1px #c08c90;"></div>
<span class="t" style="left:1011.5px;top:769.71px;font:normal 25px/25px 'Liberation Sans',sans-serif;color:#641020;transform:scaleX(0.9670);-webkit-text-stroke:0.3px #641020;">00:00</span>
<div style="left:820.5px;top:805.5px;width:301px;height:29px;background:linear-gradient(90deg,#0a8a0a 0%,#30ff30 2.5%,#20e020 4%,#108010 5%,#108010 95%,#20e020 96%,#30ff30 97.5%,#0a8a0a 100%);border-top:2px solid #30f030;border-bottom:2px solid #30f030;"></div>
<div style="left:833.5px;top:808px;width:273.5px;height:23px;background:linear-gradient(90deg,rgba(255,255,255,.55) 0%,rgba(255,255,255,.25) 35%,rgba(0,0,0,0) 65%,rgba(0,0,0,.14) 100%),linear-gradient(180deg,#f4f4f4 0%,#e4e4e4 45%,#cfcfcf 80%,#a9a9a9 100%);box-shadow:inset 1px 1px 0 #fff,inset -1px -1px 0 #8c8c8c,0 1px 0 #777;"></div>
<span class="t" style="left:870.5px;top:810.31px;font:bold 20.8px/20.8px 'Liberation Sans',sans-serif;color:#111;transform:scaleX(0.9233);">Jog ON/OFF Ctrl-Alt-J</span>
<div style="left:1150px;top:520px;width:370px;height:318px;background:#d5d1ca;box-shadow:inset 2px 2px 2px #e6e3de,inset -4px -4px 2px #6e6c68;"></div>
<div style="left:1176px;top:526px;width:316px;height:34px;background:#8a8ad6;border-top:2px solid #4a4a90;border-left:2px solid #50509a;border-bottom:1px solid #a8a8e8;"></div>
<span class="t" style="left:1247px;top:532.21px;font:bold 24px/24px 'DejaVu Sans','Liberation Sans',sans-serif;color:#14143a;transform:scaleX(1.2837);">Feed Rate</span>
<span class="t" style="left:1197.5px;top:574.50px;font:normal 10.4px/10.4px 'Liberation Sans',sans-serif;color:#444;transform:scaleX(1.1082);">OverRidden</span>
<div style="left:1180.5px;top:590.5px;width:160.5px;height:10px;background:#4a3a3c;box-shadow:inset 3px 1px 0 #7a6a6c;"></div>
<span class="t" style="left:1427.5px;top:567.41px;font:normal 14px/14px 'Liberation Sans',sans-serif;color:#222;transform:scaleX(1.0351);">FRO %</span>
<span class="t" style="left:1469px;top:593.01px;font:normal 25px/25px 'Liberation Sans',sans-serif;color:#111;transform:scaleX(0.9230);-webkit-text-stroke:0.3px #111;">100</span>
<span class="t" style="left:1162.5px;top:673.80px;font:normal 21.3px/21.3px 'Liberation Sans',sans-serif;color:#222;transform:scaleX(0.8785);-webkit-text-stroke:0.3px #222;">FRO</span>
<div style="left:1240px;top:671.5px;width:158px;height:24.5px;background:linear-gradient(180deg,#ececb0 0%,#e4e4a2 55%,#d4d494 80%,#b4b482 100%);box-shadow:inset 4px 0 3px #f2f2c4,inset -4px 0 3px #b8b888;"></div>
<span class="t" style="left:1341px;top:672.21px;font:normal 23.9px/23.9px 'Liberation Sans',sans-serif;color:#4e4e0a;transform:scaleX(0.9029);-webkit-text-stroke:0.3px #4e4e0a;">6.00</span>
<span class="t" style="left:1168px;top:711.01px;font:normal 18.7px/18.7px 'Liberation Sans',sans-serif;color:#222;transform:scaleX(0.9486);-webkit-text-stroke:0.3px #222;">Feedrate</span>
<svg style="left:1370px;top:696px" width="76" height="50" viewBox="0 0 76 50"><defs><radialGradient id="rg1" cx="50%" cy="40%" r="60%"><stop offset="0" stop-color="#ffffff"/><stop offset="0.6" stop-color="#ececec"/><stop offset="1" stop-color="#b0b0b0"/></radialGradient></defs><ellipse cx="38" cy="25" rx="34.5" ry="22" fill="url(#rg1)" stroke="#0a0a0a" stroke-width="2.2"/></svg>
<span class="t" style="left:1378px;top:715.01px;font:bold 15.5px/15.5px 'DejaVu Sans','Liberation Sans',sans-serif;color:#111;transform:scaleX(1.1493);">Reset</span>
<div style="left:1159px;top:738px;width:207px;height:24px;background:linear-gradient(180deg,#ececb0 0%,#e4e4a2 55%,#d4d494 80%,#b4b482 100%);box-shadow:inset 4px 0 3px #f2f2c4,inset -4px 0 3px #b8b888;"></div>
<span class="t" style="left:1309.5px;top:738.41px;font:normal 23.9px/23.9px 'Liberation Sans',sans-serif;color:#4e4e0a;transform:scaleX(0.8921);-webkit-text-stroke:0.3px #4e4e0a;">6.00</span>
<span class="t" style="left:1160px;top:779.51px;font:normal 16.6px/16.6px 'Liberation Sans',sans-serif;color:#222;transform:scaleX(0.9179);">Units/Min</span>
<div style="left:1277px;top:775px;width:160px;height:26px;background:linear-gradient(180deg,#ececb0 0%,#e4e4a2 55%,#d4d494 80%,#b4b482 100%);box-shadow:inset 4px 0 3px #f2f2c4,inset -4px 0 3px #b8b888;"></div>
<span class="t" style="left:1377px;top:777.01px;font:normal 23.9px/23.9px 'Liberation Sans',sans-serif;color:#4e4e0a;transform:scaleX(0.9459);-webkit-text-stroke:0.3px #4e4e0a;">0.00</span>
<span class="t" style="left:1160px;top:812.51px;font:normal 16.6px/16.6px 'Liberation Sans',sans-serif;color:#222;transform:scaleX(0.9381);">Units/Rev</span>
<div style="left:1285.5px;top:807px;width:154px;height:25.5px;background:linear-gradient(180deg,#ececb0 0%,#e4e4a2 55%,#d4d494 80%,#b4b482 100%);box-shadow:inset 4px 0 3px #f2f2c4,inset -4px 0 3px #b8b888;"></div>
<span class="t" style="left:1379.5px;top:809.01px;font:normal 23.9px/23.9px 'Liberation Sans',sans-serif;color:#4e4e0a;transform:scaleX(0.9566);-webkit-text-stroke:0.3px #4e4e0a;">0.00</span>
<div style="left:1449.5px;top:754px;width:58px;height:79px;background:linear-gradient(90deg,#5affaa 0%,#34f586 18%,#22e66c 55%,#17c84a 72%,#0a9a22 84%,#057c10 100%);border-radius:3px 1px 1px 1px;box-shadow:inset 0 2px 2px rgba(160,255,200,.6);"></div>
<div style="left:1527px;top:520px;width:371px;height:318px;background:#d5d1ca;box-shadow:inset 2px 2px 2px #e6e3de,inset -4px -4px 2px #6e6c68;"></div>
<div style="left:1545px;top:534px;width:154px;height:20.5px;background:linear-gradient(90deg,rgba(255,255,255,.55) 0%,rgba(255,255,255,.25) 35%,rgba(0,0,0,0) 65%,rgba(0,0,0,.14) 100%),linear-gradient(180deg,#f4f4f4 0%,#e4e4e4 45%,#cfcfcf 80%,#a9a9a9 100%);box-shadow:inset 1px 1px 0 #fff,inset -1px -1px 0 #8c8c8c,0 1px 0 #777;"></div>
<span class="t" style="left:1569px;top:535.71px;font:bold 20.8px/20.8px 'Liberation Sans',sans-serif;color:#111;transform:scaleX(0.9766);">Remember</span>
<div style="left:1754px;top:534px;width:113.5px;height:20px;background:linear-gradient(90deg,rgba(255,255,255,.55) 0%,rgba(255,255,255,.25) 35%,rgba(0,0,0,0) 65%,rgba(0,0,0,.14) 100%),linear-gradient(180deg,#f4f4f4 0%,#e4e4e4 45%,#cfcfcf 80%,#a9a9a9 100%);box-shadow:inset 1px 1px 0 #fff,inset -1px -1px 0 #8c8c8c,0 1px 0 #777;"></div>
<span class="t" style="left:1776.7px;top:534.31px;font:bold 20.8px/20.8px 'Liberation Sans',sans-serif;color:#111;transform:scaleX(0.9086);">Return</span>
<span class="t" style="left:1650px;top:561.01px;font:normal 31.2px/31.2px 'Liberation Sans',sans-serif;color:#111;transform:scaleX(0.9242);-webkit-text-stroke:0.3px #111;">G54</span>
<div style="left:1613px;top:603px;width:203px;height:22.5px;background:linear-gradient(90deg,rgba(255,255,255,.55) 0%,rgba(255,255,255,.25) 35%,rgba(0,0,0,0) 65%,rgba(0,0,0,.14) 100%),linear-gradient(180deg,#f4f4f4 0%,#e4e4e4 45%,#cfcfcf 80%,#a9a9a9 100%);box-shadow:inset 1px 1px 0 #fff,inset -1px -1px 0 #8c8c8c,0 1px 0 #777;"></div>
<span class="t" style="left:1646px;top:604.91px;font:bold 20.8px/20.8px 'Liberation Sans',sans-serif;color:#111;transform:scaleX(0.9475);">Fixture 1 (G54)</span>
<div style="left:1613px;top:631.5px;width:203px;height:22.5px;background:linear-gradient(90deg,rgba(255,255,255,.55) 0%,rgba(255,255,255,.25) 35%,rgba(0,0,0,0) 65%,rgba(0,0,0,.14) 100%),linear-gradient(180deg,#f4f4f4 0%,#e4e4e4 45%,#cfcfcf 80%,#a9a9a9 100%);box-shadow:inset 1px 1px 0 #fff,inset -1px -1px 0 #8c8c8c,0 1px 0 #777;"></div>
<span class="t" style="left:1646px;top:632.81px;font:bold 20.8px/20.8px 'Liberation Sans',sans-serif;color:#111;transform:scaleX(0.9475);">Fixture 2 (G55)</span>
<div style="left:1613px;top:659.5px;width:203px;height:22.5px;background:linear-gradient(90deg,rgba(255,255,255,.55) 0%,rgba(255,255,255,.25) 35%,rgba(0,0,0,0) 65%,rgba(0,0,0,.14) 100%),linear-gradient(180deg,#f4f4f4 0%,#e4e4e4 45%,#cfcfcf 80%,#a9a9a9 100%);box-shadow:inset 1px 1px 0 #fff,inset -1px -1px 0 #8c8c8c,0 1px 0 #777;"></div>
<span class="t" style="left:1646px;top:660.41px;font:bold 20.8px/20.8px 'Liberation Sans',sans-serif;color:#111;transform:scaleX(0.9475);">Fixture 3 (G56)</span>
<div style="left:1614.7px;top:687px;width:203.3px;height:22.7px;background:linear-gradient(90deg,rgba(255,255,255,.55) 0%,rgba(255,255,255,.25) 35%,rgba(0,0,0,0) 65%,rgba(0,0,0,.14) 100%),linear-gradient(180deg,#f4f4f4 0%,#e4e4e4 45%,#cfcfcf 80%,#a9a9a9 100%);box-shadow:inset 1px 1px 0 #fff,inset -1px -1px 0 #8c8c8c,0 1px 0 #777;"></div>
<span class="t" style="left:1647.7px;top:689.01px;font:bold 20.8px/20.8px 'Liberation Sans',sans-serif;color:#111;transform:scaleX(0.9427);">Fixture 4 (G57)</span>
<div style="left:1546px;top:718px;width:332px;height:45px;background:#4a4640;filter:blur(1.5px);"></div>
<div style="left:1548.5px;top:719.5px;width:326px;height:40.5px;background:#f8d414;box-shadow:inset 0 0 3px 1px #a88a08;"></div>
<div style="left:1557px;top:726.5px;width:308.5px;height:24.5px;background:linear-gradient(90deg,#9a9a9a 0%,#e8e8e8 6%,#dcdcdc 50%,#e8e8e8 94%,#9a9a9a 100%);box-shadow:inset 0 2px 2px #fff,inset 0 -2px 2px #7a7a7a;"></div>
<span class="t" style="left:1591.5px;top:730.21px;font:bold 19px/19px 'DejaVu Sans','Liberation Sans',sans-serif;color:#111;transform:scaleX(1.2088);">Save Work Offsets</span>
<div style="left:1557.3px;top:772.4px;width:206px;height:22.6px;background:linear-gradient(90deg,rgba(255,255,255,.55) 0%,rgba(255,255,255,.25) 35%,rgba(0,0,0,0) 65%,rgba(0,0,0,.14) 100%),linear-gradient(180deg,#f4f4f4 0%,#e4e4e4 45%,#cfcfcf 80%,#a9a9a9 100%);box-shadow:inset 1px 1px 0 #fff,inset -1px -1px 0 #8c8c8c,0 1px 0 #777;"></div>
<span class="t" style="left:1588px;top:773.31px;font:bold 20.8px/20.8px 'Liberation Sans',sans-serif;color:#111;transform:scaleX(0.9506);">THC Min Speed</span>
<div style="left:1778px;top:773px;width:28.5px;height:18px;background:#2c4a38;"></div>
<span class="t" style="left:1633.5px;top:800.00px;font:normal 35.4px/35.4px 'Liberation Sans',sans-serif;color:#111;transform:scaleX(0.8634);-webkit-text-stroke:0.3px #111;">60</span>
<div style="left:1561px;top:833px;width:109px;height:1px;background:#555;"></div>
<div style="left:1669px;top:801px;width:1px;height:33px;background:#555;"></div>
<span class="t" style="left:1685.5px;top:812.41px;font:normal 15.6px/15.6px 'Liberation Sans',sans-serif;color:#222;transform:scaleX(1.0814);">%</span>
<div style="left:7px;top:839px;width:1897px;height:118px;background:linear-gradient(180deg,#dcdcf2 0%,#c9c9ec 6%,#a8a8dc 18%,#7a7ac2 28%,#5050a6 40%,#3a3a92 50%,#2a2a70 62%,#1c1c4c 76%,#0e0e2a 90%,#040410 100%);"></div>
<div style="left:7.5px;top:957.3px;width:1896px;height:3px;background:linear-gradient(180deg,#fdfdfd,#f4f3f1 70%,#dcd9d3);"></div>
<div style="left:15px;top:860px;width:109px;height:21px;background:linear-gradient(90deg,rgba(255,255,255,.55) 0%,rgba(255,255,255,.25) 35%,rgba(0,0,0,0) 65%,rgba(0,0,0,.14) 100%),linear-gradient(180deg,#f4f4f4 0%,#e4e4e4 45%,#cfcfcf 80%,#a9a9a9 100%);box-shadow:inset 1px 1px 0 #fff,inset -1px -1px 0 #8c8c8c,0 1px 0 #777;"></div>
<span class="t" style="left:37.5px;top:861.51px;font:bold 20.8px/20.8px 'Liberation Sans',sans-serif;color:#111;transform:scaleX(0.8931);">History</span>
<div style="left:134px;top:860px;width:88.5px;height:21px;background:linear-gradient(90deg,rgba(255,255,255,.55) 0%,rgba(255,255,255,.25) 35%,rgba(0,0,0,0) 65%,rgba(0,0,0,.14) 100%),linear-gradient(180deg,#f4f4f4 0%,#e4e4e4 45%,#cfcfcf 80%,#a9a9a9 100%);box-shadow:inset 1px 1px 0 #fff,inset -1px -1px 0 #8c8c8c,0 1px 0 #777;"></div>
<span class="t" style="left:153px;top:861.51px;font:bold 20.8px/20.8px 'Liberation Sans',sans-serif;color:#111;transform:scaleX(0.9802);">Clear</span>
<span class="t" style="left:227.5px;top:858.51px;font:bold 22.5px/22.5px 'DejaVu Sans','Liberation Sans',sans-serif;color:#26264a;transform:scaleX(1.2047);">Status:</span>
<div style="left:340px;top:854.5px;width:798px;height:35px;background:linear-gradient(180deg,#33322e 0,#3a3834 4.5px,#d4d0c8 5px,#d4d0c8 calc(100% - 9.5px),#eeeae8 calc(100% - 7px),#ece8e5 calc(100% - 2px),#dad6d0 100%);"></div>
<div style="left:340px;top:854.5px;width:8px;height:30px;background:#807e7b;clip-path:polygon(0 0,100% 4.5px,100% 100%,0 100%);"></div>
<div style="left:1129px;top:856.5px;width:9px;height:33px;background:linear-gradient(90deg,rgba(236,232,228,0),#e9e5e0 60%,#e2ded8);clip-path:polygon(0 4px,100% 0,100% 100%,0 100%);"></div>
<span class="t" style="left:358px;top:863.01px;font:normal 18.9px/18.9px 'Liberation Sans',sans-serif;color:#111;transform:scaleX(0.9689);-webkit-text-stroke:0.3px #111;">10Ga settings</span>
<span class="t" style="left:1154px;top:858.51px;font:bold 22.5px/22.5px 'DejaVu Sans','Liberation Sans',sans-serif;color:#1e1e3e;transform:scaleX(1.2760);">Profile:</span>
<div style="left:1275px;top:854.5px;width:603px;height:35px;background:linear-gradient(180deg,#33322e 0,#3a3834 4.5px,#d4d0c8 5px,#d4d0c8 calc(100% - 9.5px),#eeeae8 calc(100% - 7px),#ece8e5 calc(100% - 2px),#dad6d0 100%);"></div>
<div style="left:1275px;top:854.5px;width:8px;height:30px;background:#807e7b;clip-path:polygon(0 0,100% 4.5px,100% 100%,0 100%);"></div>
<div style="left:1869px;top:856.5px;width:9px;height:33px;background:linear-gradient(90deg,rgba(236,232,228,0),#e9e5e0 60%,#e2ded8);clip-path:polygon(0 4px,100% 0,100% 100%,0 100%);"></div>
<span class="t" style="left:1284px;top:864.00px;font:normal 19.8px/19.8px 'Liberation Sans',sans-serif;color:#111;transform:scaleX(0.9590);-webkit-text-stroke:0.3px #111;">CrossFire-v1.1</span>
<div style="left:42px;top:890px;width:171px;height:48px;background:linear-gradient(135deg,#0c7a0c 0%,#064a06 50%,#021602 100%);border-radius:8px;"></div>
<div style="left:41px;top:888.7px;width:165px;height:42.5px;background:linear-gradient(180deg,#3cff3c 0%,#22f022 18%,#1ee61e 80%,#18d018 100%);border-radius:7px;box-shadow:inset 2px 2px 2px #7aff7a,1px 1px 1px #0a8a0a;"></div>
<span class="t" style="left:89.5px;top:899.50px;font:normal 12px/12px 'DejaVu Sans','Liberation Sans',sans-serif;color:#075a07;transform:scaleX(1.6237);-webkit-text-stroke:0.4px #075a07;">Normal</span>
<span class="t" style="left:77px;top:916.00px;font:normal 12px/12px 'DejaVu Sans','Liberation Sans',sans-serif;color:#075a07;transform:scaleX(1.6240);-webkit-text-stroke:0.4px #075a07;">Condition</span>
</body></html>
